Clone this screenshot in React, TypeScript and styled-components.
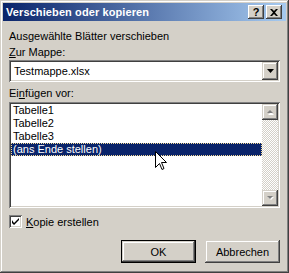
import styled, { createGlobalStyle } from 'styled-components';

const GlobalStyle = createGlobalStyle`
  html, body {
    margin: 0;
    padding: 0;
    background: #d4d0c8;
  }
  body {
    font-family: 'Liberation Sans', Arial, sans-serif;
    font-size: 11px;
    color: #000;
  }
`;

const Window = styled.div`
  position: relative;
  width: 289px;
  height: 273px;
  box-sizing: border-box;
  padding: 3px;
  background: #d4d0c8;
  box-shadow: inset -1px -1px #404040, inset 1px 1px #d4d0c8,
    inset -2px -2px #808080, inset 2px 2px #fff;
  display: flex;
  flex-direction: column;
`;

const TitleBar = styled.div`
  height: 18px;
  display: flex;
  align-items: center;
  padding: 0 4px 0 3px;
  background: linear-gradient(to right, #0a246a, #a6caf0);
  color: #fff;
`;

const TitleText = styled.span`
  flex: 1;
  font-weight: bold;
  font-size: 11px;
  letter-spacing: 0.1px;
`;

const CaptionButton = styled.div<{ $gap?: boolean }>`
  width: 16px;
  height: 14px;
  margin-left: ${(p) => (p.$gap ? '2px' : '0')};
  box-sizing: border-box;
  background: #d4d0c8;
  box-shadow: inset -1px -1px #404040, inset 1px 1px #fff,
    inset -2px -2px #808080, inset 2px 2px #d4d0c8;
  display: flex;
  align-items: center;
  justify-content: center;
  color: #000;
  font-weight: bold;
  font-size: 11px;
  line-height: 1;
`;

const Body = styled.div`
  flex: 1;
  display: flex;
  flex-direction: column;
  padding: 9px 6px 0 6px;
`;

const Label = styled.div<{ $top?: number }>`
  height: 13px;
  line-height: 13px;
  margin-top: ${(p) => p.$top ?? 0}px;
  white-space: nowrap;
`;

const Sunken = styled.div`
  box-sizing: border-box;
  background: #fff;
  box-shadow: inset 1px 1px #808080, inset -1px -1px #fff,
    inset 2px 2px #404040, inset -2px -2px #d4d0c8;
  padding: 2px;
`;

const Combo = styled(Sunken)`
  margin-top: 1px;
  height: 22px;
  display: flex;
  align-items: stretch;
`;

const ComboText = styled.div`
  flex: 1;
  padding-left: 3px;
  line-height: 18px;
`;

const RaisedButton = styled.div`
  box-sizing: border-box;
  background: #d4d0c8;
  box-shadow: inset -1px -1px #404040, inset 1px 1px #d4d0c8,
    inset -2px -2px #808080, inset 2px 2px #fff;
  display: flex;
  align-items: center;
  justify-content: center;
`;

const DropButton = styled(RaisedButton)`
  width: 16px;
`;

const ListBox = styled(Sunken)`
  margin-top: 2px;
  height: 106px;
  display: flex;
`;

const Items = styled.div`
  flex: 1;
  display: flex;
  flex-direction: column;
`;

const Item = styled.div<{ $selected?: boolean }>`
  height: 13px;
  line-height: 13px;
  padding-left: 2px;
  white-space: nowrap;
  background: ${(p) => (p.$selected ? '#0a246a' : 'transparent')};
  color: ${(p) => (p.$selected ? '#fff' : '#000')};
  outline: ${(p) => (p.$selected ? '1px dotted #f5db95' : 'none')};
  outline-offset: -1px;
`;

const ScrollBar = styled.div`
  width: 16px;
  display: flex;
  flex-direction: column;
`;

const ScrollButton = styled(RaisedButton)`
  height: 16px;
`;

const Track = styled.div`
  flex: 1;
  background: repeating-conic-gradient(#d4d0c8 0 25%, #fff 0 50%) 0 0 / 2px 2px;
`;

const CheckRow = styled.div`
  margin-top: 7px;
  display: flex;
  align-items: center;
  gap: 4px;
`;

const CheckBox = styled(Sunken)`
  width: 13px;
  height: 13px;
  padding: 0;
  display: flex;
  align-items: center;
  justify-content: center;
`;

const Buttons = styled.div`
  margin-top: 12px;
  display: flex;
  justify-content: flex-end;
  gap: 9px;
`;

const PushButton = styled(RaisedButton)<{ $default?: boolean }>`
  width: 75px;
  height: 23px;
  border: ${(p) => (p.$default ? '1px solid #000' : 'none')};
`;

const Cursor = styled.svg`
  position: absolute;
  left: 155px;
  top: 151px;
`;

export default function App() {
  return (
    <>
      <GlobalStyle />
      <Window>
        <TitleBar>
          <TitleText>Verschieben oder kopieren</TitleText>
          <CaptionButton>?</CaptionButton>
          <CaptionButton $gap>
            <svg width="8" height="7" viewBox="0 0 8 7">
              <path d="M0 0h2l2 2 2-2h2L5 3.5 8 7H6L4 5 2 7H0l3-3.5z" fill="#000" />
            </svg>
          </CaptionButton>
        </TitleBar>
        <Body>
          <Label>Ausgewählte Blätter verschieben</Label>
          <Label $top={3}>
            <u>Z</u>ur Mappe:
          </Label>
          <Combo>
            <ComboText>Testmappe.xlsx</ComboText>
            <DropButton>
              <svg width="7" height="4" viewBox="0 0 7 4">
                <path d="M0 0h7L3.5 4z" fill="#000" />
              </svg>
            </DropButton>
          </Combo>
          <Label $top={5}>
            Ei<u>n</u>fügen vor:
          </Label>
          <ListBox>
            <Items>
              <Item>Tabelle1</Item>
              <Item>Tabelle2</Item>
              <Item>Tabelle3</Item>
              <Item $selected>(ans Ende stellen)</Item>
            </Items>
            <ScrollBar>
              <ScrollButton>
                <svg width="8" height="5" viewBox="0 0 8 5">
                  <path d="M4 1L7 4H1z" fill="#fff" transform="translate(1 1)" />
                  <path d="M4 0L7 3H1z" fill="#808080" />
                </svg>
              </ScrollButton>
              <Track />
              <ScrollButton>
                <svg width="8" height="5" viewBox="0 0 8 5">
                  <path d="M1 0h6L4 3z" fill="#fff" transform="translate(1 1)" />
                  <path d="M1 0h6L4 3z" fill="#808080" />
                </svg>
              </ScrollButton>
            </ScrollBar>
          </ListBox>
          <CheckRow>
            <CheckBox>
              <svg width="7" height="7" viewBox="0 0 7 7">
                <path d="M0 2v3l2 2 5-5V-0L2 5z" fill="#000" />
              </svg>
            </CheckBox>
            <span>
              <u>K</u>opie erstellen
            </span>
          </CheckRow>
          <Buttons>
            <PushButton $default>OK</PushButton>
            <PushButton>Abbrechen</PushButton>
          </Buttons>
        </Body>
        <Cursor width="12" height="20" viewBox="0 0 12 20">
          <path
            d="M0.5 0.5V16.5L4.5 12.5L7 18.5L9 17.5L6.5 11.5H11.5Z"
            fill="#fff"
            stroke="#000"
            strokeWidth="1"
          />
        </Cursor>
      </Window>
    </>
  );
}
